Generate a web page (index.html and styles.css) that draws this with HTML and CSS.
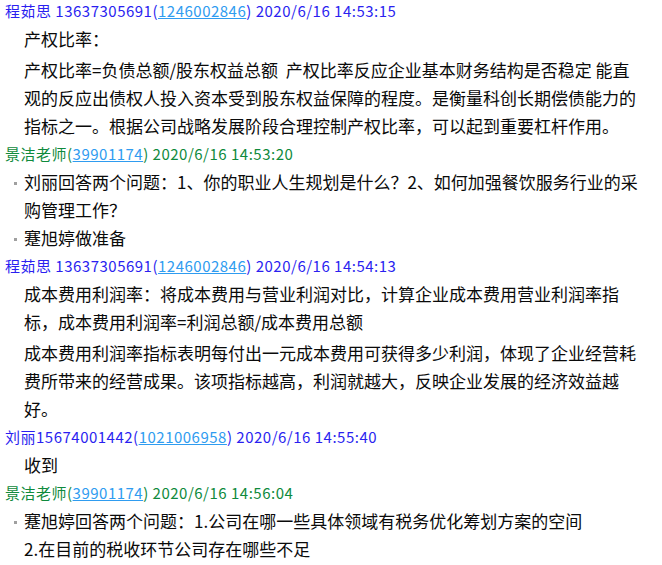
FILE: index.html
```html
<!DOCTYPE html>
<html lang="zh-CN">
<head>
<meta charset="utf-8">
<link rel="stylesheet" href="styles.css">
</head>
<body>
<div class="chat">
  <div class="msg">
    <div class="hd blue">程茹思 13637305691(<a class="qq">1246002846</a>) 2020/6/16 14:53:15</div>
    <div class="bd">
      <p>产权比率：</p>
      <p>产权比率=负债总额/股东权益总额&nbsp; 产权比率反应企业基本财务结构是否稳定 能直观的反应出债权人投入资本受到股东权益保障的程度。是衡量科创长期偿债能力的指标之一。根据公司战略发展阶段合理控制产权比率，可以起到重要杠杆作用。</p>
    </div>
  </div>
  <div class="msg">
    <div class="hd green">景洁老师(<a class="qq">39901174</a>) 2020/6/16 14:53:20</div>
    <ul class="bd list">
      <li>刘丽回答两个问题：1、你的职业人生规划是什么？2、如何加强餐饮服务行业的采购管理工作？</li>
      <li>蹇旭婷做准备</li>
    </ul>
  </div>
  <div class="msg">
    <div class="hd blue">程茹思 13637305691(<a class="qq">1246002846</a>) 2020/6/16 14:54:13</div>
    <div class="bd">
      <p>成本费用利润率：将成本费用与营业利润对比，计算企业成本费用营业利润率指标，成本费用利润率=利润总额/成本费用总额</p>
      <p>成本费用利润率指标表明每付出一元成本费用可获得多少利润，体现了企业经营耗费所带来的经营成果。该项指标越高，利润就越大，反映企业发展的经济效益越好。</p>
    </div>
  </div>
  <div class="msg">
    <div class="hd blue">刘丽15674001442(<a class="qq">1021006958</a>) 2020/6/16 14:55:40</div>
    <div class="bd">
      <p>收到</p>
    </div>
  </div>
  <div class="msg">
    <div class="hd green">景洁老师(<a class="qq">39901174</a>) 2020/6/16 14:56:04</div>
    <ul class="bd list">
      <li>蹇旭婷回答两个问题：1.公司在哪一些具体领域有税务优化筹划方案的空间</li>
      <li class="plain">2.在目前的税收环节公司存在哪些不足</li>
    </ul>
  </div>
</div>
</body>
</html>
```

FILE: styles.css
```css
html, body {
  margin: 0;
  padding: 0;
  background: #ffffff;
}
.chat {
  width: 642px;
  margin-top: -2px;
  font-family: "Noto Sans CJK SC", "Noto Sans", sans-serif;
}
.msg {
  display: flex;
  flex-direction: column;
}
.hd {
  padding-left: 5px;
  font-size: 15px;
  line-height: 26px;
  height: 26px;
  letter-spacing: 0.5px;
  white-space: nowrap;
}
.blue {
  color: #2b1ff0;
}
.green {
  color: #0f8a3c;
}
.qq {
  color: #2f9cf0;
  text-decoration: underline;
}
.bd {
  margin: 0;
  padding: 1px 0 1px 24px;
  font-size: 17px;
  line-height: 28px;
  color: #0a0a0a;
}
.bd p {
  margin: 0;
}
.bd p + p {
  margin-top: 3px;
}
.list {
  list-style: none;
  padding-left: 14px;
}
.list li {
  display: flex;
}
.list li::before {
  content: "";
  flex: none;
  width: 3px;
  height: 3px;
  background: #a0a0a0;
  margin: 14px 7px 0 0;
}
.list li.plain::before {
  visibility: hidden;
}
```
